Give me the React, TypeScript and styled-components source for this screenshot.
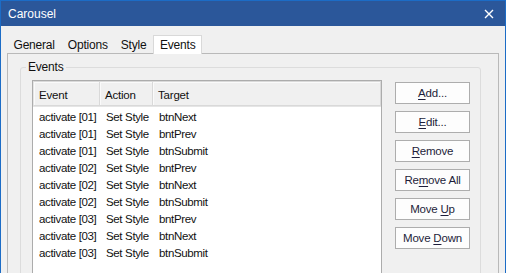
import type { ReactElement } from 'react'
import styled, { createGlobalStyle } from 'styled-components'

type EventRow = { event: string; action: string; target: string }

const ROWS: EventRow[] = [
  { event: 'activate [01]', action: 'Set Style', target: 'btnNext' },
  { event: 'activate [01]', action: 'Set Style', target: 'bntPrev' },
  { event: 'activate [01]', action: 'Set Style', target: 'btnSubmit' },
  { event: 'activate [02]', action: 'Set Style', target: 'bntPrev' },
  { event: 'activate [02]', action: 'Set Style', target: 'btnNext' },
  { event: 'activate [02]', action: 'Set Style', target: 'btnSubmit' },
  { event: 'activate [03]', action: 'Set Style', target: 'bntPrev' },
  { event: 'activate [03]', action: 'Set Style', target: 'btnNext' },
  { event: 'activate [03]', action: 'Set Style', target: 'btnSubmit' },
]

// label split around the access key letter
const BUTTONS: [string, string, string][] = [
  ['', 'A', 'dd...'],
  ['', 'E', 'dit...'],
  ['', 'R', 'emove'],
  ['Re', 'm', 'ove All'],
  ['Move ', 'U', 'p'],
  ['Move ', 'D', 'own'],
]

const TABS = ['General', 'Options', 'Style', 'Events']

const App = (): ReactElement => {
  return (
    <>
      <GlobalStyle />
      <Window>
        <TitleBar>
          <span>Carousel</span>
          <CloseIcon width="10" height="10" viewBox="0 0 10 10">
            <path d="M1 1 L9 9 M9 1 L1 9" stroke="#fff" strokeWidth="1.4" fill="none" />
          </CloseIcon>
        </TitleBar>
        <Body>
          <TabStrip>
            {TABS.map(tab => (
              <Tab key={tab} $active={tab === 'Events'}>
                {tab}
              </Tab>
            ))}
          </TabStrip>
          <Panel>
            <GroupBox>
              <Legend>Events</Legend>
              <ListView>
                <HeaderRow>
                  <HeaderCell>Event</HeaderCell>
                  <HeaderCell>Action</HeaderCell>
                  <HeaderCell>Target</HeaderCell>
                </HeaderRow>
                <Rows>
                  {ROWS.map((row, i) => (
                    <Row key={i}>
                      <Cell>{row.event}</Cell>
                      <Cell>{row.action}</Cell>
                      <Cell>{row.target}</Cell>
                    </Row>
                  ))}
                </Rows>
              </ListView>
              <ButtonColumn>
                {BUTTONS.map(([pre, key, post]) => (
                  <Button key={pre + key + post}>
                    {pre}
                    <u>{key}</u>
                    {post}
                  </Button>
                ))}
              </ButtonColumn>
            </GroupBox>
          </Panel>
        </Body>
      </Window>
    </>
  )
}

export default App

const GlobalStyle = createGlobalStyle`
  html, body {
    margin: 0;
    padding: 0;
    background: #f0f0f0;
  }
  body {
    font-family: "Liberation Sans", Arial, sans-serif;
    color: #1a1a1a;
  }
  * { box-sizing: border-box; }
`

const Window = styled.div`
  width: 506px;
  height: 273px;
  overflow: hidden;
  display: flex;
  flex-direction: column;
  background: #f0f0f0;
  border: 1px solid #1c6cc6;
  border-bottom: none;
`

const TitleBar = styled.div`
  height: 25px;
  flex-shrink: 0;
  display: flex;
  align-items: center;
  justify-content: space-between;
  padding: 0 11px 0 7px;
  background: #2b579a;
  color: #fff;
  font-size: 12px;
`

const CloseIcon = styled.svg`
  display: block;
`

const Body = styled.div`
  flex: 1;
  display: flex;
  flex-direction: column;
  padding: 9px 6px 0 6px;
`

const TabStrip = styled.div`
  display: flex;
  align-items: flex-end;
  height: 18px;
  flex-shrink: 0;
`

const Tab = styled.div<{ $active: boolean }>`
  height: ${p => (p.$active ? '19px' : '17px')};
  padding: ${p => (p.$active ? '0 6px' : '0 6.5px')};
  margin-bottom: ${p => (p.$active ? '-1px' : '0')};
  display: flex;
  align-items: center;
  font-size: 12px;
  letter-spacing: -0.2px;
  color: #111;
  background: ${p => (p.$active ? '#fff' : 'transparent')};
  border: ${p => (p.$active ? '1px solid #d9d9d9' : 'none')};
  border-bottom: none;
  position: relative;
  z-index: 1;
`

const Panel = styled.div`
  flex: 1;
  border: 1px solid #b9b9b9;
  padding: 13px 17px 0 12px;
  display: flex;
  flex-direction: column;
`

const GroupBox = styled.div`
  position: relative;
  flex: 1;
  border: 1px solid #dcdcdc;
  border-radius: 3px;
  padding: 12px 10px 0 11px;
  display: flex;
  gap: 13px;
`

const Legend = styled.span`
  position: absolute;
  top: -8px;
  left: 5px;
  padding: 0 2px;
  background: #f0f0f0;
  font-size: 12px;
  letter-spacing: -0.2px;
  line-height: 15px;
  color: #111;
`

const ListView = styled.div`
  width: 350px;
  height: 200px;
  flex-shrink: 0;
  background: #fff;
  border: 1px solid #acacac;
`

const HeaderRow = styled.div`
  display: grid;
  grid-template-columns: 67px 53px 1fr;
  height: 26px;
  border-bottom: 1px solid #e5e5e5;
`

const HeaderCell = styled.div`
  display: flex;
  align-items: center;
  padding: 2px 0 0 5px;
  font-size: 11.5px;
  letter-spacing: -0.2px;
  background: #f0f0f0;
  border: 1px solid #d9d9d9;
  border-left: none;
  box-shadow: inset 1px 1px 0 #fafafa;
  color: #111;
  &:first-child {
    border-left: 1px solid #e5e5e5;
  }
`

const Rows = styled.div`
  padding-top: 1px;
`

const Row = styled.div`
  display: grid;
  grid-template-columns: 67px 53px 1fr;
  height: 17px;
  align-items: center;
`

const Cell = styled.div`
  padding-left: 6px;
  font-size: 11.5px;
  letter-spacing: -0.35px;
  white-space: nowrap;
  color: #111;
`

const ButtonColumn = styled.div`
  display: flex;
  flex-direction: column;
  gap: 7px;
  padding-top: 2px;
`

const Button = styled.div`
  width: 75px;
  height: 22px;
  display: flex;
  align-items: center;
  justify-content: center;
  border: 1px solid #adadad;
  background: #fdfdfd;
  font-size: 11.5px;
  letter-spacing: -0.2px;
  color: #1e1e3a;
  white-space: pre;
  u {
    text-underline-offset: 2px;
  }
`
